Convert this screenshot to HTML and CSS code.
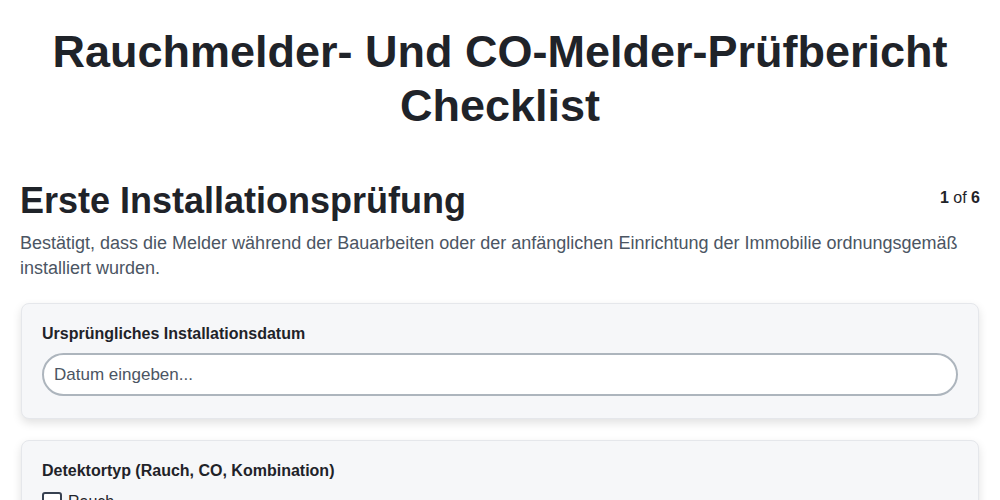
FILE: index.html
```
<!DOCTYPE html>
<html lang="de">
<head>
    <meta charset="UTF-8">
    <meta name="viewport" content="width=device-width, initial-scale=1.0">
    <title>Rauchmelder- Und CO-Melder-Prüfbericht Checklist</title>
    <link rel="stylesheet" href="styles.css">
</head>
<body>
    <h1 class="page-title">Rauchmelder- Und CO-Melder-Prüfbericht Checklist</h1>

    <section class="step">
        <div class="step-head">
            <h2>Erste Installationsprüfung</h2>
            <span class="step-count"><strong>1</strong> of <strong>6</strong></span>
        </div>
        <p class="step-desc">Bestätigt, dass die Melder während der Bauarbeiten oder der anfänglichen Einrichtung der Immobilie ordnungsgemäß installiert wurden.</p>

        <div class="field-card">
            <label class="field-label" for="datum">Ursprüngliches Installationsdatum</label>
            <input class="field-input" id="datum" type="text" placeholder="Datum eingeben...">
        </div>

        <div class="field-card">
            <span class="field-label">Detektortyp (Rauch, CO, Kombination)</span>
            <label class="check"><span class="box"></span> Rauch</label>
            <label class="check"><span class="box"></span> CO</label>
            <label class="check"><span class="box"></span> Kombination</label>
        </div>
    </section>
</body>
</html>
```

FILE: styles.css
```
body {
    font-family: 'Liberation Sans', Arial, sans-serif;
    margin: 0;
    padding: 0 20px;
    background-color: #ffffff;
    color: #1f2329;
}
.page-title {
    text-align: center;
    font-size: 45px;
    line-height: 54px;
    margin: 25px 0 46px;
    color: #1f2329;
}
.step-head {
    display: flex;
    justify-content: space-between;
    align-items: flex-start;
}
.step-head h2 {
    font-size: 36px;
    line-height: 44px;
    margin: 0;
}
.step-count {
    font-size: 16px;
    margin-top: 10px;
}
.step-desc {
    font-size: 18px;
    line-height: 25px;
    color: #4b5563;
    margin: 8px 0 22px;
}
.field-card {
    background-color: #f6f7f9;
    border: 1px solid #e5e7eb;
    border-radius: 8px;
    margin: 0 1px 21px;
    padding: 20px 20px 22px;
    box-shadow: 0 4px 10px rgba(0,0,0,0.12);
}
.field-label {
    display: block;
    font-size: 16px;
    font-weight: bold;
    line-height: 20px;
    margin-bottom: 9px;
}
.field-input {
    box-sizing: border-box;
    width: 100%;
    height: 43px;
    border: 2px solid #adb5bd;
    border-radius: 22px;
    padding: 0 10px;
    font-family: inherit;
    font-size: 17px;
    color: #1f2329;
    background: #ffffff;
}
.field-input::placeholder {
    color: #4b5563;
}
.check {
    display: flex;
    align-items: center;
    gap: 6px;
    font-size: 16px;
    line-height: 24px;
}
.box {
    width: 16px;
    height: 16px;
    border: 2px solid #374151;
    border-radius: 3px;
    background: #ffffff;
}
```
